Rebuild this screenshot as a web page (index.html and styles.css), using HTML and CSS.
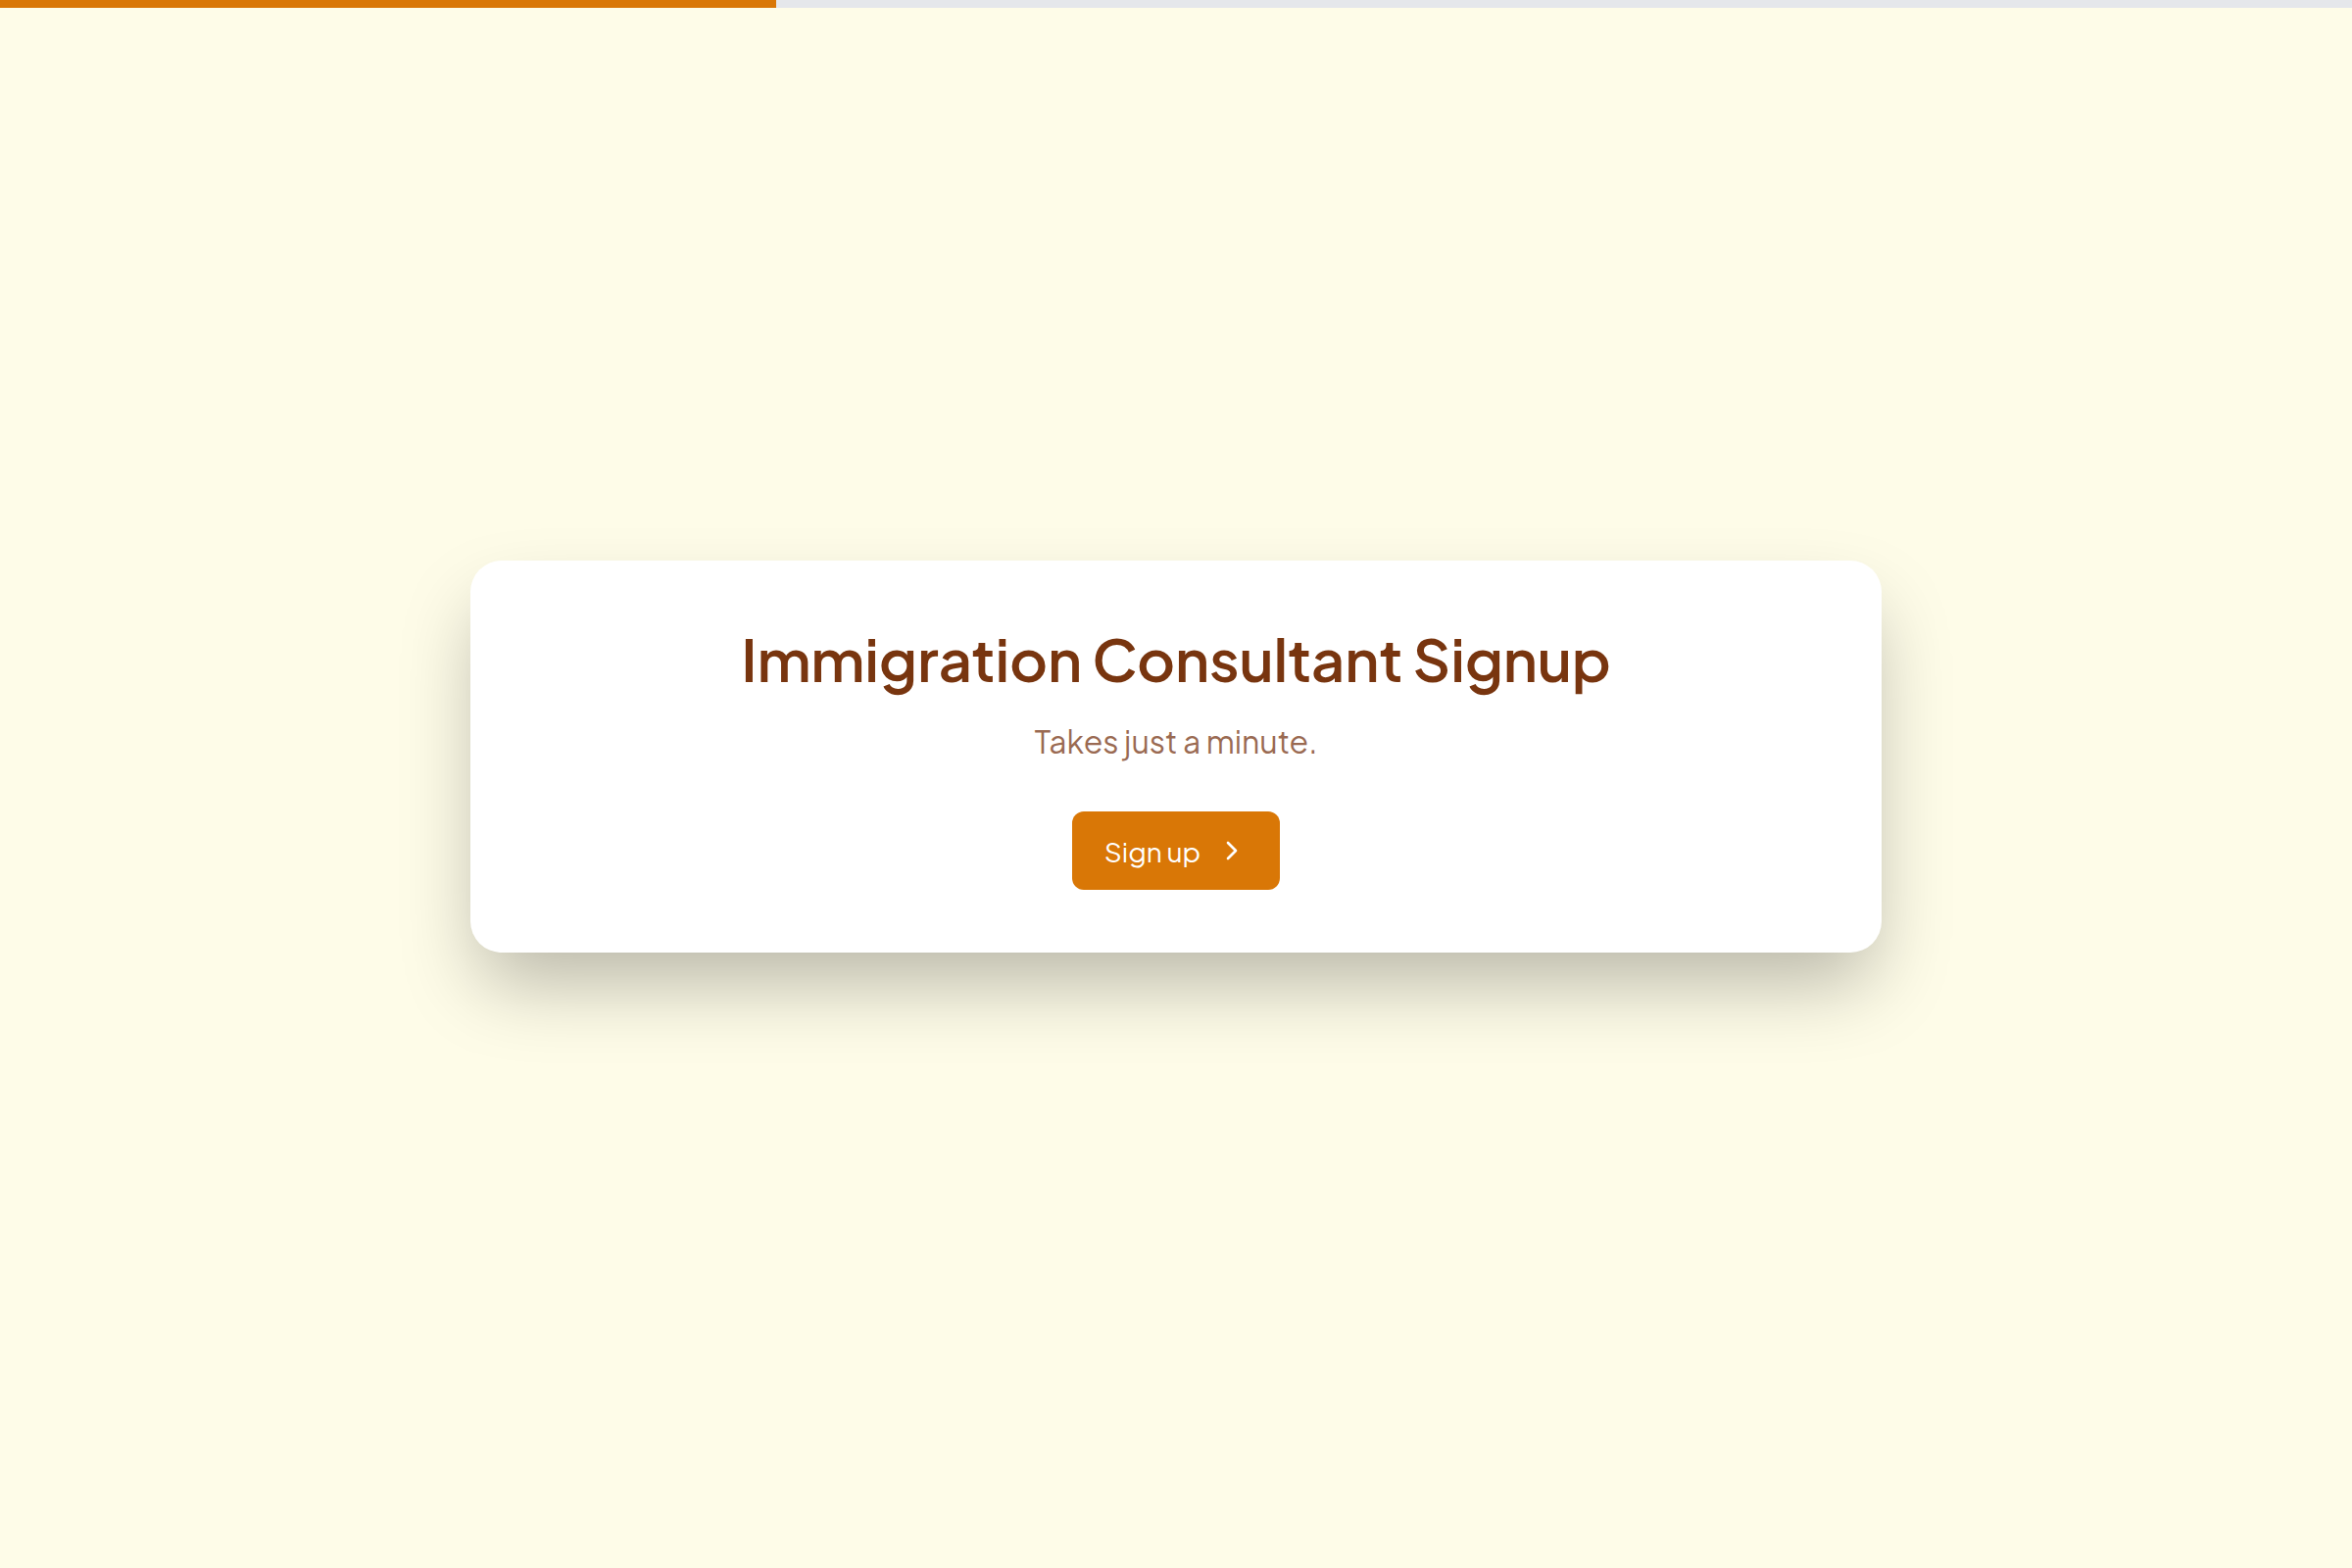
FILE: index.html
```html
<!DOCTYPE html>
<html lang="en">
<head>
<meta charset="utf-8">
<title>Immigration Consultant Signup</title>
<link rel="stylesheet" href="styles.css">
</head>
<body>
<div class="progress"><div class="progress-fill" style="width:33%"></div></div>
<main class="stage">
  <section class="card">
    <h1 class="title">Immigration Consultant Signup</h1>
    <p class="subtitle">Takes just a minute.</p>
    <button class="cta" type="button">
      <span>Sign up</span>
      <svg class="cta-icon" viewBox="0 0 24 24" fill="none" stroke="currentColor" stroke-width="2" stroke-linecap="round" stroke-linejoin="round" aria-hidden="true"><path d="m9 18 6-6-6-6"/></svg>
    </button>
  </section>
</main>
</body>
</html>
```
FILE: styles.css
```css
* { box-sizing: border-box; }
html, body { margin: 0; padding: 0; }
body {
  background: #fefce8;
  font-family: "Plus Jakarta Sans", Inter, "Noto Sans", sans-serif;
  min-height: 100vh;
  display: flex;
  flex-direction: column;
}
.progress {
  height: 8px;
  background: #e5e7eb;
  flex: none;
}
.progress-fill {
  height: 100%;
  background: #d97706;
}
.stage {
  flex: 1;
  display: flex;
  align-items: center;
  justify-content: center;
  padding-bottom: 64px;
}
.card {
  width: 1440px;
  background: #ffffff;
  border-radius: 32px;
  padding: 64px;
  text-align: center;
  box-shadow: 0 40px 80px -10px rgba(0, 0, 0, 0.28);
}
.title {
  margin: 0;
  font-size: 60px;
  line-height: 72px;
  font-weight: 600;
  color: #78350f;
  letter-spacing: -0.2px;
}
.subtitle {
  margin: 28px 0 0;
  font-size: 32px;
  line-height: 40px;
  color: #9a6a52;
}
.cta {
  margin-top: 52px;
  height: 80px;
  padding: 0 33px;
  border: none;
  border-radius: 12px;
  background: #d97706;
  color: #ffffff;
  font-family: inherit;
  font-size: 28px;
  font-weight: 400;
  display: inline-flex;
  align-items: center;
  gap: 16px;
  cursor: pointer;
}
.cta-icon {
  width: 32px;
  height: 32px;
}
```
